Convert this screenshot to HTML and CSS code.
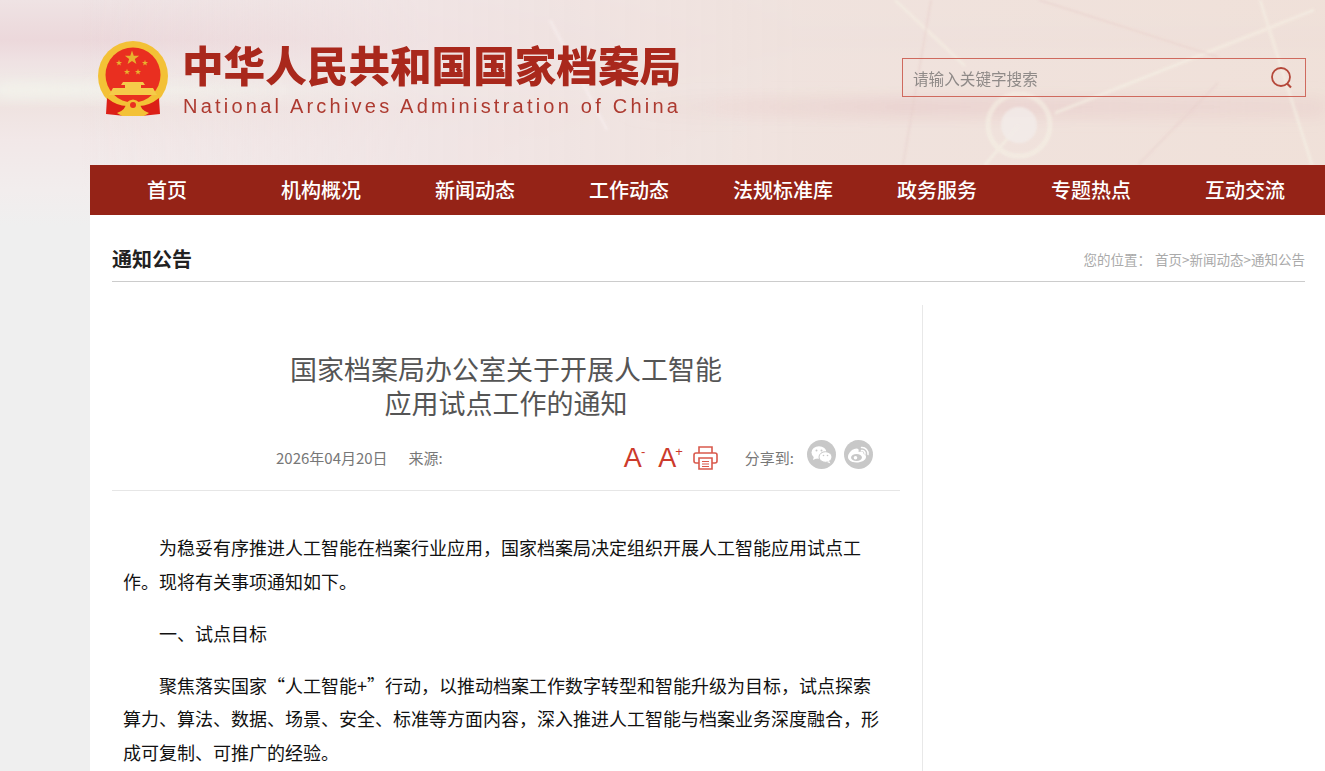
FILE: index.html

```html
<!DOCTYPE html>
<html lang="zh-CN">
<head>
<meta charset="UTF-8" />
<title>国家档案局办公室关于开展人工智能应用试点工作的通知</title>
<link rel="stylesheet" href="styles.css">
</head>
<body>
<svg class="bg-lines" width="1325" height="230" viewBox="0 0 1325 230" aria-hidden="true">
  <defs>
    <filter id="soft" x="-20%" y="-100%" width="140%" height="300%"><feGaussianBlur stdDeviation="7"/></filter>
    <filter id="soft-line"><feGaussianBlur stdDeviation="0.800"/></filter>
    <linearGradient id="band-r" x1="0" x2="1" y1="0" y2="0">
      <stop offset="0" stop-color="#e9cfcd" stop-opacity="0"/>
      <stop offset="0.4" stop-color="#e9cfcd" stop-opacity="0.8"/>
      <stop offset="1" stop-color="#e9cfcd" stop-opacity="0.5"/>
    </linearGradient>
    <linearGradient id="band-l" x1="0" x2="1" y1="0" y2="0">
      <stop offset="0" stop-color="#f3f1ea" stop-opacity="1"/>
      <stop offset="1" stop-color="#f3f1ea" stop-opacity="0"/>
    </linearGradient>
  </defs>
  <rect x="620" y="97" width="705" height="20" fill="url(#band-r)" filter="url(#soft)"/>
  <rect x="0" y="84" width="280" height="12" fill="url(#band-l)" filter="url(#soft)"/>
  <g filter="url(#soft-line)">
    <g fill="none" stroke="#f5f0e4" stroke-width="3" opacity="0.6">
      <path d="M895 0L965 66"/>
      <path d="M1314 10L1055 113"/>
      <path d="M1260 0L1312 165"/>
      <path d="M1019 125L985 165"/>
      <circle cx="1019" cy="125" r="31" stroke-width="5"/>
    </g>
    <g fill="none" stroke="#e8cfcb" stroke-width="2" opacity="0.5">
      <path d="M1039 0L1218 57"/>
      <path d="M931 0L903 165"/>
      <path d="M1218 83L1138 165"/>
    </g>
    <path d="M550 20L607 130" fill="none" stroke="#f7eeee" stroke-width="3" opacity="0.6"/>
    <circle cx="1019" cy="125" r="18" fill="#f3ecea" opacity="0.8"/>
  </g>
</svg>

<header class="header">
  <a class="logo" href="#">
    <svg class="emblem" width="72" height="76" viewBox="0 0 72 76">
      <defs>
        <path id="star" d="M0 -10L2.350 -3.100L9.500 -3.100L3.800 1.200L5.900 8.100L0 4L-5.900 8.100L-3.800 1.200L-9.500 -3.100L-2.350 -3.100Z"/>
      </defs>
      <circle cx="36" cy="35" r="35" fill="#f3c136"/>
      <circle cx="36" cy="34" r="27.500" fill="#e92f20"/>
      <g fill="#e8b22e">
        <use href="#star" transform="translate(35 17) scale(0.75)"/>
        <use href="#star" transform="translate(22 22) scale(0.32)"/>
        <use href="#star" transform="translate(48 22) scale(0.32)"/>
        <use href="#star" transform="translate(30 31) scale(0.32)"/>
        <use href="#star" transform="translate(41 31) scale(0.32)"/>
      </g>
      <path d="M26 41H46L48 44H44V47H56L60 54H12L16 47H28V44H24Z" fill="#f5cb4a"/>
      <path d="M10 57Q20 65 30 65L28 75L9 73Z" fill="#dc1f17"/>
      <path d="M62 57Q52 65 42 65L44 75L63 73Z" fill="#dc1f17"/>
      <path d="M20 72Q29 69 29 62Q36 55 43 62Q43 69 52 72L47 75H25Z" fill="#f3c136"/>
      <circle cx="36" cy="64" r="3" fill="#e92f20"/>
    </svg>
    <div class="logo-text">
      <div class="logo-cn">中华人民共和国国家档案局</div>
      <div class="logo-en">National Archives Administration of China</div>
    </div>
  </a>
  <form class="search">
    <input type="text" placeholder="请输入关键字搜索" />
    <svg width="24" height="24" viewBox="0 0 24 24" fill="none" stroke="#b5483a" stroke-width="1.800">
      <circle cx="11" cy="11" r="9"/>
      <path d="M17 17.500L21 21.500" stroke-width="2.200"/>
    </svg>
  </form>
</header>

<div class="page">
  <nav class="nav">
    <a href="#">首页</a>
    <a href="#">机构概况</a>
    <a href="#">新闻动态</a>
    <a href="#">工作动态</a>
    <a href="#">法规标准库</a>
    <a href="#">政务服务</a>
    <a href="#">专题热点</a>
    <a href="#">互动交流</a>
  </nav>

  <div class="main">
    <div class="crumb-bar">
      <h3>通知公告</h3>
      <div class="crumb"><span>您的位置：</span><a href="#">首页</a>&gt;<a href="#">新闻动态</a>&gt;<a href="#">通知公告</a></div>
    </div>

    <div class="columns">
      <article class="article">
        <h1>国家档案局办公室关于开展人工智能<br>应用试点工作的通知</h1>
        <div class="meta">
          <span class="date">2026年04月20日</span>
          <span class="source">来源:</span>
          <div class="tools">
            <a class="font-btn" href="#">A<sup>-</sup></a>
            <a class="font-btn" href="#">A<sup>+</sup></a>
            <svg class="print" width="25" height="25" viewBox="0 0 25 25" fill="none" stroke="#d9594c" stroke-width="1.600">
              <path d="M6 8V2H19V8"/>
              <path d="M6 18H3A2 2 0 0 1 1 16V10A2 2 0 0 1 3 8H22A2 2 0 0 1 24 10V16A2 2 0 0 1 22 18H19"/>
              <path d="M6 13H19V24H6Z"/>
              <path d="M9 16.500H16M9 19H16M9 21.500H16" stroke-width="1.200"/>
            </svg>
            <span class="share-label">分享到:</span>
            <a class="share" href="#">
              <svg width="29" height="29" viewBox="0 0 29 29">
                <ellipse cx="12" cy="12.500" rx="7.500" ry="6.300" fill="#fff"/>
                <path d="M7 16L6 20L10.500 18Z" fill="#fff"/>
                <ellipse cx="18.500" cy="17" rx="6.500" ry="5.300" fill="#fff" stroke="#c8c8c8"/>
                <path d="M22 21L23.500 23.500L20 22Z" fill="#fff"/>
                <circle cx="9.500" cy="10.500" r="1" fill="#c8c8c8"/>
                <circle cx="14.500" cy="10.500" r="1" fill="#c8c8c8"/>
                <circle cx="16.500" cy="15.500" r="0.800" fill="#c8c8c8"/>
                <circle cx="20.500" cy="15.500" r="0.800" fill="#c8c8c8"/>
              </svg>
            </a>
            <a class="share" href="#">
              <svg width="29" height="29" viewBox="0 0 29 29">
                <path d="M12.500 22.500C7.500 22.500 4 20 4 17C4 13 9 8.500 12.500 8.500C14.500 8.500 15 10 14.500 12C18 10.800 20 11.800 19.500 14C21.500 14.700 22 15.800 22 17C22 20 17.500 22.500 12.500 22.500Z" fill="#fff"/>
                <ellipse cx="12.500" cy="17.500" rx="5.500" ry="3.500" fill="#c8c8c8"/>
                <circle cx="11.500" cy="17.800" r="1.800" fill="#fff"/>
                <path d="M17.500 7.500A6 6 0 0 1 24 14.500M17.500 10.500A3 3 0 0 1 21 14" fill="none" stroke="#fff" stroke-width="1.500" stroke-linecap="round"/>
              </svg>
            </a>
          </div>
        </div>
        <div class="content">
          <p>为稳妥有序推进人工智能在档案行业应用，国家档案局决定组织开展人工智能应用试点工作。现将有关事项通知如下。</p>
          <p>一、试点目标</p>
          <p>聚焦落实国家“人工智能+”行动，以推动档案工作数字转型和智能升级为目标，试点探索算力、算法、数据、场景、安全、标准等方面内容，深入推进人工智能与档案业务深度融合，形成可复制、可推广的经验。</p>
        </div>
      </article>
    </div>
  </div>
</div>
</body>
</html>
```

FILE: styles.css

```css
html {
  overflow: hidden;
}
body {
  margin: 0;
  position: relative;
  height: 771px;
  overflow: hidden;
  font-family: "Noto Sans CJK SC", "Liberation Sans", sans-serif;
  background-color: #efefef;
  background-image: linear-gradient(180deg, #efe3e4 0, #eddcde 25px, #ecd8db 40px, #efe2e3 62px, #f0e8e6 78px, #f1efea 90px, #efe3e1 108px, #f2e8e8 140px, #f2eded 190px, #efefef 225px);
  background-size: 100% 230px;
  background-repeat: no-repeat;
}
a {
  color: inherit;
  text-decoration: none;
}
/* header picture: a lighter, flatter wash over the stripes towards the right */
.bg-lines {
  position: absolute;
  left: 0;
  top: 0;
  background: linear-gradient(90deg, rgba(240,228,228,0) 80px, rgba(240,228,228,0.85) 420px, rgba(239,226,221,0.95) 800px, rgba(239,224,216,0.95) 1325px);
  -webkit-mask-image: linear-gradient(180deg, #000 165px, transparent 200px);
  mask-image: linear-gradient(180deg, #000 165px, transparent 200px);
}
.header {
  position: relative;
  height: 165px;
  display: flex;
  align-items: flex-start;
  justify-content: space-between;
  padding: 41px 19px 0 97px;
  box-sizing: border-box;
}
.logo {
  display: flex;
  gap: 13px;
}
.emblem {
  flex: none;
}
.logo-cn {
  font-size: 41.600px;
  font-weight: 900;
  line-height: 48px;
  margin-top: -1px;
  color: #a9281c;
  white-space: nowrap;
}
.logo-en {
  font-family: "Liberation Sans", sans-serif;
  font-size: 20px;
  line-height: 24px;
  margin: 6px 0 0 1px;
  color: #ad3a30;
  letter-spacing: 3.230px;
  white-space: nowrap;
}
.search {
  width: 404px;
  height: 39px;
  margin-top: 17px;
  box-sizing: border-box;
  border: 1px solid #cf6a5e;
  display: flex;
  align-items: center;
  padding: 0 11px 0 10px;
}
.search input {
  flex: 1;
  border: 0;
  outline: 0;
  background: transparent;
  padding: 0;
  font-family: inherit;
  font-size: 15.600px;
}
.search input::placeholder {
  color: #8f8a88;
  opacity: 1;
}
.page {
  position: relative;
  margin-left: 90px;
  background: #fff;
  height: 606px;
}
.nav {
  display: flex;
  height: 50px;
  background: #952317;
}
.nav a {
  flex: none;
  width: 154px;
  text-align: center;
  line-height: 50px;
  font-size: 20px;
  font-weight: 500;
  color: #fff;
}
.main {
  padding: 0 20px 0 22px;
}
.crumb-bar {
  display: flex;
  justify-content: space-between;
  align-items: center;
  height: 66px;
  border-bottom: 1px solid #ccc;
}
.crumb-bar h3 {
  margin: 22px 0 0;
  font-size: 20px;
  font-weight: 700;
  line-height: 30px;
  color: #222;
}
.crumb {
  margin-top: 21px;
  font-size: 13.500px;
  color: #aaa;
}
.crumb span {
  margin-right: 4px;
}
.columns {
  margin-top: 23px;
}
.article {
  width: 810px;
  height: 470px;
  border-right: 1px solid #e8e8e8;
}
.article h1 {
  width: 788px;
  margin: 0;
  padding-top: 47px;
  font-size: 27px;
  font-weight: 400;
  line-height: 34px;
  text-align: center;
  color: #555;
}
.meta {
  width: 788px;
  height: 52px;
  box-sizing: border-box;
  margin-top: 19px;
  padding: 0 27px 14px 164px;
  display: flex;
  align-items: center;
  border-bottom: 1px solid #e6e6e6;
  font-size: 15px;
  color: #777;
}
.source {
  margin-left: 21px;
}
.tools {
  margin-left: auto;
  display: flex;
  align-items: center;
}
.font-btn {
  font-family: "Liberation Sans", sans-serif;
  font-size: 27px;
  line-height: 30px;
  color: #cc3a2c;
  margin-right: 13px;
  white-space: nowrap;
}
.font-btn + .font-btn {
  margin-right: 10px;
}
.font-btn sup {
  font-size: 13px;
  line-height: 0;
  vertical-align: 11px;
  margin-left: -1px;
}
.print {
  margin-right: 27px;
}
.share-label {
  margin-right: 13px;
}
.share {
  display: block;
  width: 29px;
  height: 29px;
  border-radius: 50%;
  background: #c8c8c8;
  margin-right: 8px;
  margin-bottom: 6px;
}
.share:last-child {
  margin-right: 0;
}
.share svg {
  display: block;
}
.content {
  width: 758px;
  padding: 40px 0 0 11px;
}
.content p {
  margin: 0 0 18.500px;
  font-size: 18px;
  line-height: 33.500px;
  text-indent: 36px;
  color: #111;
}
```
